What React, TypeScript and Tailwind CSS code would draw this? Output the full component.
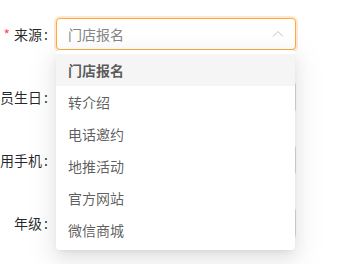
import React from "react";

const options = ["门店报名", "转介绍", "电话邀约", "地推活动", "官方网站", "微信商城"];

const FormRow = ({
  label,
  required,
  children,
}: {
  label: string;
  required?: boolean;
  children: React.ReactNode;
}) => {
  return (
    <div className="flex items-center h-8">
      <div className="w-[56px] shrink-0 flex justify-end items-center whitespace-nowrap text-[14px] text-[rgba(0,0,0,0.85)]">
        {required && <span className="text-[#ff4d4f] mr-1 text-[14px]">*</span>}
        {label}
        <span className="ml-[2px] mr-[8px]">:</span>
      </div>
      <div className="relative w-[240px] h-8">{children}</div>
    </div>
  );
};

const App = () => {
  return (
    <div
      className="w-[337px] h-[264px] overflow-hidden bg-white relative"
      style={{ fontFamily: '"Noto Sans CJK SC", "Noto Sans", sans-serif' }}
    >
      <div className="flex flex-col gap-[31px] pt-[18px]">
        <div className="relative z-10">
          <FormRow label="来源" required>
            <div className="h-8 w-full rounded-[4px] border border-[#ffa940] shadow-[0_0_0_2px_rgba(250,140,22,0.2)] flex items-center px-[11px] bg-white">
              <span className="flex-1 text-[14px] text-[#858585]">门店报名</span>
              <svg width="12" height="12" viewBox="0 0 12 12" fill="none">
                <path d="M1 8.5L6 3.5L11 8.5" stroke="#c4c4c4" strokeWidth="1" />
              </svg>
            </div>
            <div className="absolute left-0 top-[32px] w-[239px] bg-white rounded-[4px] py-1 shadow-[0_3px_6px_-4px_rgba(0,0,0,0.12),0_6px_16px_0_rgba(0,0,0,0.08),0_9px_28px_8px_rgba(0,0,0,0.05)]">
              {options.map((item, index) => {
                return (
                  <div
                    key={index}
                    className={
                      index === 0
                        ? "h-8 flex items-center px-3 text-[14px] bg-[#f5f5f5] font-semibold text-[rgba(0,0,0,0.65)]"
                        : "h-8 flex items-center px-3 text-[14px] text-[rgba(0,0,0,0.65)]"
                    }
                  >
                    {item}
                  </div>
                );
              })}
            </div>
          </FormRow>
        </div>
        <FormRow label="学员生日">
          <div className="h-8 w-full rounded-[4px] border border-[#d9d9d9] bg-white" />
        </FormRow>
        <FormRow label="常用手机">
          <div className="h-8 w-full rounded-[4px] border border-[#d9d9d9] bg-white" />
        </FormRow>
        <FormRow label="年级">
          <div className="h-8 w-full rounded-[4px] border border-[#d9d9d9] bg-white" />
        </FormRow>
      </div>
    </div>
  );
};

export default App;
